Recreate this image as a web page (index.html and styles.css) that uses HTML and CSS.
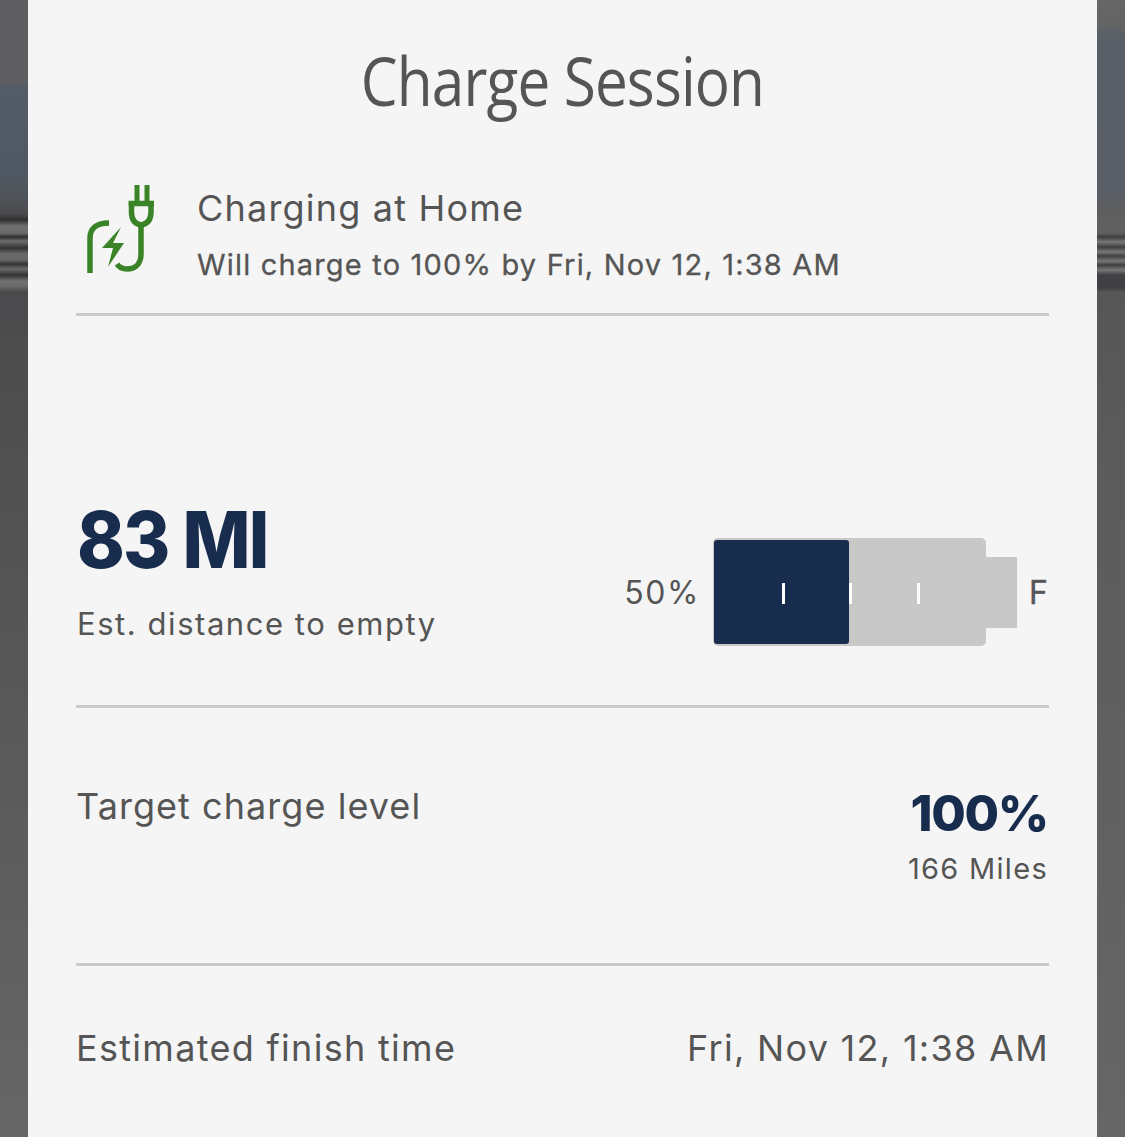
FILE: index.html
```html
<!DOCTYPE html>
<html lang="en">
<head>
    <meta charset="UTF-8">
    <title>Charge Session</title>
    <link rel="stylesheet" href="styles.css">
</head>
<body>
    <div class="side side-left"></div>
    <main class="panel">
        <h1 class="title"><span>Charge Session</span></h1>

        <section class="status">
            <svg class="plug" width="70" height="92" viewBox="0 0 70 92" fill="none" stroke="#3a8427" stroke-width="5.500">
                <path d="M5 89V54C5 44 12 39 24 39"/>
                <path d="M52 1V19M62 1V19" stroke-width="5"/>
                <path d="M43.500 19.500H69M46.500 19.500V28C46.500 36 50 40 56 41C62 40 66 36 66 28V19.500"/>
                <path d="M56 41V70C56 80 50 85 42 85C38 85 34 83 32 80"/>
                <path d="M36 43L17 64H28L23 83L39 59H28Z" fill="#3a8427" stroke="none"/>
            </svg>
            <div class="status-text">
                <div class="status-head">Charging at Home</div>
                <div class="status-sub">Will charge to 100% by Fri, Nov 12, 1:38 AM</div>
            </div>
        </section>

        <section class="range">
            <div>
                <div class="range-value"><span>83 MI</span></div>
                <div class="range-label">Est. distance to empty</div>
            </div>
            <div class="gauge">
                <span class="gauge-pct">50%</span>
                <div class="battery">
                    <div class="battery-body">
                        <div class="battery-fill"></div>
                        <i class="tick tick-1"></i>
                        <i class="tick tick-2"></i>
                        <i class="tick tick-3"></i>
                    </div>
                    <div class="battery-cap"></div>
                </div>
                <span class="gauge-f">F</span>
            </div>
        </section>

        <section class="target">
            <div class="row-label">Target charge level</div>
            <div class="target-right">
                <div class="target-value">100%</div>
                <div class="target-miles">166 Miles</div>
            </div>
        </section>

        <section class="finish">
            <div class="row-label">Estimated finish time</div>
            <div class="row-label">Fri, Nov 12, 1:38 AM</div>
        </section>
    </main>
    <div class="side side-right"></div>
</body>
</html>
```

FILE: styles.css
```css
* {
    box-sizing: border-box;
}

html, body {
    height: 1137px;
    overflow: hidden;
}

body {
    margin: 0;
    display: flex;
    font-family: "Inter", "Liberation Sans", sans-serif;
    color: #555;
}

/* Blurred photo behind the sheet */
.side {
    width: 28px;
    flex: none;
}

.side-left {
    background: linear-gradient(to bottom,
        #5f5f61 0, #5f5f61 80px, #525b66 88px, #4f5964 170px, #4f5358 200px, #4a4a4d 214px,
        #2f2f31 220px, #6f6f6f 226px, #6a6a6a 233px, #2f2f31 237px, #6c6c6c 241px, #333 248px,
        #6a6a6a 254px, #666 260px, #333 264px, #6a6a6a 269px, #333 275px, #707070 281px,
        #6a6a6a 286px, #4a4a4c 292px, #4c4c4e 320px, #666 1137px);
}

.side-right {
    background: linear-gradient(to bottom,
        #666 0, #646464 25px, #5a6068 35px, #5a5f68 190px, #5f5f60 210px, #606060 233px,
        #3f3f3f 237px, #777 242px, #3f3f3f 247px, #777 252px, #3f3f3f 256px, #777 261px,
        #3f3f3f 265px, #777 270px, #414144 275px, #3f4044 288px, #565656 292px, #5c5c5c 500px, #666 1137px);
}

.panel {
    flex: 1;
    background: #f5f5f5;
    padding: 0 48px;
}

.title {
    margin: 0;
    height: 166px;
    padding-top: 34px;
    text-align: center;
    font-family: "Open Sans", sans-serif;
    font-size: 68px;
    line-height: 92px;
    font-weight: 400;
    color: #555;
}

.title span {
    display: inline-block;
    transform: scaleX(0.86);
    letter-spacing: -1px;
    white-space: nowrap;
}

.status {
    height: 150px;
    display: flex;
    gap: 42px;
    padding: 18px 0 0 9px;
    border-bottom: 3px solid #c9c9c9;
}

.plug {
    flex: none;
}

.status-head {
    font-size: 36px;
    line-height: 48px;
    letter-spacing: 1.2px;
}

.status-sub {
    margin-top: 13px;
    font-size: 29px;
    line-height: 40px;
    letter-spacing: 1.18px;
    -webkit-text-stroke: 0.3px #555;
}

.range {
    height: 392px;
    display: flex;
    justify-content: space-between;
    align-items: flex-end;
    padding: 0 0 60px 1px;
    border-bottom: 3px solid #c9c9c9;
}

.range-value {
    font-size: 78px;
    line-height: 88px;
    font-weight: 800;
    color: #182c4e;
    letter-spacing: -2px;
}

.range-value span {
    display: inline-block;
    transform: scaleX(0.925);
    transform-origin: left;
}

.range-label {
    margin-top: 19px;
    font-size: 31px;
    line-height: 42px;
    letter-spacing: 1.55px;
}

.gauge {
    display: flex;
    align-items: center;
    margin-bottom: -1px;
}

.gauge-pct {
    font-size: 32px;
    letter-spacing: 1.6px;
    margin-right: 13px;
}

.gauge-f {
    font-size: 32px;
    -webkit-text-stroke: 0.4px #555;
    margin-left: 12px;
    margin-right: 1px;
}

.battery {
    display: flex;
    align-items: center;
}

.battery-body {
    position: relative;
    width: 273px;
    height: 108px;
    background: #c8c8c8;
    border-radius: 5px;
}

.battery-fill {
    position: absolute;
    left: 1px;
    top: 2px;
    width: 135px;
    height: 104px;
    background: #182c4e;
    border-radius: 3px;
}

.tick {
    position: absolute;
    top: 45px;
    width: 3px;
    height: 21px;
    background: #fff;
}

.tick-1 { left: 69px; }
.tick-2 { left: 136px; }
.tick-3 { left: 204px; }

.battery-cap {
    width: 31px;
    height: 71px;
    background: #c8c8c8;
}

.target {
    height: 258px;
    display: flex;
    justify-content: space-between;
    padding: 0 1px 0 0;
    border-bottom: 3px solid #c9c9c9;
}

.row-label {
    font-size: 36px;
    line-height: 48px;
    letter-spacing: 1.3px;
}

.target .row-label {
    margin-top: 74px;
    letter-spacing: 1.05px;
}

.target-right {
    margin-top: 75px;
    text-align: right;
}

.target-value {
    font-size: 50px;
    line-height: 60px;
    font-weight: 800;
    color: #182c4e;
    letter-spacing: -1.3px;
}

.target-miles {
    margin-top: 5px;
    font-size: 29px;
    line-height: 42px;
    letter-spacing: 1.3px;
}

.finish {
    display: flex;
    justify-content: space-between;
    padding: 58px 0 0;
}
```
